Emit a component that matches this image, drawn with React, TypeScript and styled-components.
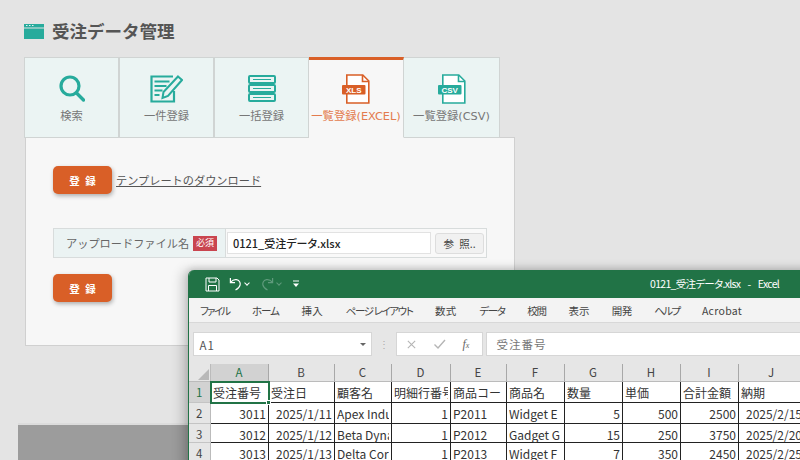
import styled, { createGlobalStyle } from "styled-components";

const GlobalStyle = createGlobalStyle`
	html, body {
		margin: 0;
		padding: 0;
		background: #e4e4e4;
	}
	* {
		box-sizing: border-box;
	}
`;

const JP = `"Noto Sans CJK JP", "Noto Sans", sans-serif`;
const TEAL = "#27ab9c";
const ORANGE = "#d95f27";

type TabKind = "search" | "single" | "bulk" | "xls" | "csv";

const tabs: { kind: TabKind; label: string }[] = [
	{ kind: "search", label: "検索" },
	{ kind: "single", label: "一件登録" },
	{ kind: "bulk", label: "一括登録" },
	{ kind: "xls", label: "一覧登録(EXCEL)" },
	{ kind: "csv", label: "一覧登録(CSV)" },
];

function FileIcon({ color, text }: { color: string; text: string }) {
	return (
		<svg width="28" height="30" viewBox="0 0 28 30">
			<path d="M4.800 1h16l6 6v22h-22z" fill="#fff" stroke={color} strokeWidth="1.600" />
			<path d="M20.500 1v6.500h6.500" fill="none" stroke={color} strokeWidth="1.600" />
			<rect x="0" y="11" width="23.500" height="9.500" rx="1" fill={color} />
			<text x="11.700" y="18.900" textAnchor="middle" fontSize="8" fontWeight="700" fill="#fff" fontFamily="Liberation Sans">
				{text}
			</text>
		</svg>
	);
}

function TabIcon({ kind }: { kind: TabKind }) {
	if (kind === "search") {
		return (
			<svg width="26" height="28" viewBox="0 0 26 28">
				<circle cx="11" cy="11" r="9" fill="none" stroke={TEAL} strokeWidth="3.200" />
				<path d="M17.500 18l7 7" stroke={TEAL} strokeWidth="3.400" strokeLinecap="round" />
			</svg>
		);
	}
	if (kind === "single") {
		return (
			<svg width="33" height="28" viewBox="0 0 33 28">
				<path d="M23 1.500H1.500v25H24V16" fill="none" stroke={TEAL} strokeWidth="2.200" />
				<path d="M4.500 6.500h15M4.500 11h12M4.500 15.500h8M4.500 20h5" stroke={TEAL} strokeWidth="1.800" />
				<path d="M28 1.500l4 3.500L18 21l-5.500 2L13.500 17z" fill="#ebf4f3" stroke={TEAL} strokeWidth="2" />
			</svg>
		);
	}
	if (kind === "bulk") {
		return (
			<svg width="28" height="27" viewBox="0 0 28 27">
				<g fill="none" stroke={TEAL} strokeWidth="2">
					<rect x="1" y="1" width="26" height="7" rx="1" />
					<rect x="1" y="10" width="26" height="7" rx="1" />
					<rect x="1" y="19" width="26" height="7" rx="1" />
				</g>
				<path d="M5 4.500h18M5 13.500h18M5 22.500h18" stroke={TEAL} strokeWidth="1" />
			</svg>
		);
	}
	return <FileIcon color={kind === "xls" ? ORANGE : TEAL} text={kind === "xls" ? "XLS" : "CSV"} />;
}

const ribbonTabs = [
	{ name: "ファイル", tracking: -1.75 },
	{ name: "ホーム", tracking: -1 },
	{ name: "挿入", tracking: 0.4 },
	{ name: "ページ レイアウト", tracking: -1.4 },
	{ name: "数式", tracking: 0.4 },
	{ name: "データ", tracking: -1.3 },
	{ name: "校閲", tracking: -1.1 },
	{ name: "表示", tracking: -0.1 },
	{ name: "開発", tracking: -0.6 },
	{ name: "ヘルプ", tracking: -1.6 },
	{ name: "Acrobat", tracking: 0.3 },
];
const columns = ["A", "B", "C", "D", "E", "F", "G", "H", "I", "J"];
const headerRow = ["受注番号", "受注日", "顧客名", "明細行番号", "商品コード", "商品名", "数量", "単価", "合計金額", "納期"];
const rightColumns = [0, 1, 3, 6, 7, 8, 9];
const dataRows = [
	["3011", "2025/1/11", "Apex Industries", "1", "P2011", "Widget E", "5", "500", "2500", "2025/2/15"],
	["3012", "2025/1/12", "Beta Dynamics", "1", "P2012", "Gadget G", "15", "250", "3750", "2025/2/20"],
	["3013", "2025/1/13", "Delta Corporation", "1", "P2013", "Widget F", "7", "350", "2450", "2025/2/25"],
];

export default function App() {
	return (
		<Page>
			<GlobalStyle />
			<TitleRow>
				<svg width="20" height="15" viewBox="0 0 20 15">
					<rect width="20" height="15" fill={TEAL} />
					<rect y="3.500" width="20" height="1" fill="#e4e4e4" />
					<path d="M2 1.500h1.500M5 1.500h1.500M8 1.500h1.500" stroke="#e4f4f2" strokeWidth="1" />
				</svg>
				<Title>受注データ管理</Title>
			</TitleRow>
			<TabBar>
				{tabs.map((tab) => (
					<Tab key={tab.kind} $active={tab.kind === "xls"}>
						<TabIconBox>
							<TabIcon kind={tab.kind} />
						</TabIconBox>
						<TabLabel>{tab.label}</TabLabel>
					</Tab>
				))}
			</TabBar>
			<Panel>
				<ActionRow>
					<OrangeButton>登 録</OrangeButton>
					<TemplateLink>テンプレートのダウンロード</TemplateLink>
				</ActionRow>
				<UploadRow>
					<UploadLabel>
						アップロードファイル名
						<Required>必須</Required>
					</UploadLabel>
					<UploadField>
						<FileName>0121_受注データ.xlsx</FileName>
						<BrowseButton>参 照..</BrowseButton>
					</UploadField>
				</UploadRow>
				<OrangeButton>登 録</OrangeButton>
			</Panel>
			<GrayBlock />

			<ExcelWindow>
				<TitleBar>
					<svg width="15" height="15" viewBox="0 0 15 15" fill="none" stroke="#fff" strokeWidth="1">
						<path d="M1 1h11l2 2v11H1z" />
						<path d="M4 1v4h7V1M3.500 14V8.500h8V14" />
					</svg>
					<UndoBox>
						<svg width="13" height="14" viewBox="0 0 14 15" fill="none" stroke="#fff" strokeWidth="1.300">
							<path d="M1.500 1v5h5M1.800 5.500C4 3 6 2.500 8 2.800c3 .5 4.500 3 4 5.700-.4 2-2 4-5 5.500" />
						</svg>
						<Caret $dim={false} />
					</UndoBox>
					<UndoBox>
						<svg width="13" height="14" viewBox="0 0 14 15" fill="none" stroke="#5f9a7c" strokeWidth="1.300">
							<path d="M12.500 1v5h-5M12.200 5.500C10 3 8 2.500 6 2.800c-3 .5-4.500 3-4 5.700.4 2 2 4 5 5.500" />
						</svg>
						<Caret $dim />
					</UndoBox>
					<CustomizeIcon>
						<svg width="8" height="8" viewBox="0 0 8 8">
							<path d="M1 1h6" stroke="#fff" strokeWidth="1" />
							<path d="M1 3.500h6L4 7z" fill="#fff" />
						</svg>
					</CustomizeIcon>
					<WindowTitle>0121_受注データ.xlsx&nbsp; - &nbsp;Excel</WindowTitle>
				</TitleBar>
				<RibbonTabs>
					{ribbonTabs.map((tab) => (
						<RibbonTab key={tab.name} $tracking={tab.tracking}>
							{tab.name}
						</RibbonTab>
					))}
				</RibbonTabs>
				<FormulaBar>
					<NameBox>
						A1
						<NameCaret />
					</NameBox>
					<Dots>⋮</Dots>
					<FxBox>
						<svg width="11" height="11" viewBox="0 0 12 12" fill="none" stroke="#b5b5b5" strokeWidth="1.200">
							<path d="M2 2l8 8M10 2l-8 8" />
						</svg>
						<svg width="13" height="12" viewBox="0 0 13 12" fill="none" stroke="#b5b5b5" strokeWidth="1.400">
							<path d="M1.500 6.500L5 10l7-8" />
						</svg>
						<FxLabel>
							f<small>x</small>
						</FxLabel>
					</FxBox>
					<FormulaInput>受注番号</FormulaInput>
				</FormulaBar>
				<Sheet>
					<Corner />
					{columns.map((col, i) => (
						<ColHead key={col} $active={i === 0}>
							{col}
						</ColHead>
					))}
					<RowHead $active>1</RowHead>
					{headerRow.map((text, i) => (
						<Cell key={text} $selected={i === 0}>
							<CellText>{text}</CellText>
							{i === 0 && <FillHandle />}
						</Cell>
					))}
					{dataRows.map((row, r) => (
						<SheetRow key={row[0]} row={row} index={r + 2} />
					))}
				</Sheet>
			</ExcelWindow>
		</Page>
	);
}

function SheetRow({ row, index }: { row: string[]; index: number }) {
	return (
		<>
			<RowHead $active={false}>{index}</RowHead>
			{row.map((text, i) => (
				<Cell key={`${text}_${i}`} $right={rightColumns.includes(i)}>
					<CellText>{text}</CellText>
				</Cell>
			))}
		</>
	);
}

const Page = styled.div`
	position: relative;
	width: 800px;
	height: 460px;
	overflow: hidden;
	background: #e4e4e4;
	font-family: ${JP};
	padding-top: 23px;
`;

const TitleRow = styled.div`
	display: flex;
	align-items: center;
	gap: 8px;
	height: 16px;
	margin-left: 24px;
`;

const Title = styled.h1`
	margin: 0;
	font-size: 17.5px;
	font-weight: 700;
	line-height: 16px;
	color: #555;
`;

const TabBar = styled.div`
	display: flex;
	margin: 18px 0 0 24px;
	width: 476px;
	height: 81px;
	position: relative;
	z-index: 1;
`;

const Tab = styled.div<{ $active: boolean }>`
	width: 95px;
	flex: none;
	display: flex;
	flex-direction: column;
	align-items: center;
	background: ${({ $active }) => ($active ? "#f7f7f7" : "#ebf4f3")};
	border: 1px solid #d0d4d3;
	border-left-width: ${({ $active }) => ($active ? "0" : "1px")};
	border-top: ${({ $active }) => ($active ? `3px solid ${ORANGE}` : "1px solid #d0d4d3")};
	border-bottom: ${({ $active }) => ($active ? "1px solid #f7f7f7" : "1px solid #d0d4d3")};
	color: ${({ $active }) => ($active ? "#e37b4e" : "#777")};
	padding-top: ${({ $active }) => ($active ? "13px" : "15px")};
	&:last-child {
		width: 96px;
		border-left-width: 0;
	}
`;

const TabIconBox = styled.div`
	height: 31px;
	display: flex;
	align-items: center;
	justify-content: center;
`;

const TabLabel = styled.div`
	margin-top: 4.5px;
	font-family: "DejaVu Sans", ${JP};
	font-size: 11.3px;
	line-height: 16px;
	white-space: nowrap;
`;

const Panel = styled.div`
	margin: -1px 0 0 25px;
	width: 490px;
	height: 209px;
	background: #f7f7f7;
	border: 1px solid #d0d0d0;
	padding: 28px 0 0 27px;
`;

const ActionRow = styled.div`
	display: flex;
	align-items: center;
	gap: 4px;
	margin-bottom: 34px;
`;

const OrangeButton = styled.button`
	display: block;
	width: 59px;
	height: 28px;
	padding: 0;
	border: 0;
	border-radius: 5px;
	background: ${ORANGE};
	color: #fff;
	font-family: ${JP};
	font-size: 10.5px;
	font-weight: 700;
	word-spacing: 3px;
	box-shadow: 1px 2px 4px rgba(0, 0, 0, 0.3);
`;

const TemplateLink = styled.a`
	font-size: 11.2px;
	color: #555;
	text-decoration: underline;
	white-space: nowrap;
`;

const UploadRow = styled.div`
	display: flex;
	width: 434px;
	height: 30px;
	margin-bottom: 16px;
	border: 1px solid #d8dcdc;
`;

const UploadLabel = styled.div`
	display: flex;
	align-items: center;
	width: 172px;
	padding-left: 12px;
	background: #ebf3f3;
	border-right: 1px solid #d8dcdc;
	font-size: 11.2px;
	color: #666;
	white-space: nowrap;
`;

const Required = styled.span`
	margin-left: 4px;
	width: 24px;
	height: 15px;
	background: #c9454f;
	color: #fff;
	font-size: 9px;
	line-height: 14px;
	text-align: center;
`;

const UploadField = styled.div`
	flex: 1;
	display: flex;
	align-items: center;
	gap: 4px;
	padding: 0 1px;
	background: #f9f9f9;
`;

const FileName = styled.div`
	width: 204px;
	height: 22px;
	padding-left: 5px;
	background: #fff;
	border: 1px solid #e2e2e2;
	font-size: 11px;
	font-feature-settings: "palt";
	line-height: 20px;
	font-weight: 500;
	color: #222;
`;

const BrowseButton = styled.button`
	width: 49px;
	height: 21px;
	padding: 0;
	border: 1px solid #ddd;
	border-radius: 3px;
	background: #f1f1f1;
	color: #444;
	font-family: ${JP};
	font-size: 10.5px;
	word-spacing: 3px;
`;

const GrayBlock = styled.div`
	margin: 77px 0 0 18px;
	height: 40px;
	background: #9c9c9c;
	border-top: 2px solid #dcdcdc;
`;

const ExcelWindow = styled.div`
	position: absolute;
	left: 188px;
	top: 270px;
	width: 640px;
	height: 200px;
	overflow: hidden;
	border-radius: 6px 0 0 0;
	border-left: 1.5px solid #217346;
	background: #e6e6e6;
	font-family: ${JP};
	box-shadow: -6px 0 12px rgba(0, 0, 0, 0.18), 0 -2px 6px rgba(0, 0, 0, 0.12);
	z-index: 2;
`;

const TitleBar = styled.div`
	position: relative;
	display: flex;
	align-items: center;
	height: 28px;
	padding-left: 16px;
	background: #217346;
	color: #fff;
`;

const UndoBox = styled.div`
	display: flex;
	align-items: center;
	gap: 3px;
	width: 29px;
	margin-left: 3px;
	&:first-of-type {
		margin-left: 9px;
	}
`;

const Caret = styled.span<{ $dim: boolean }>`
	width: 4px;
	height: 4px;
	margin-top: -2px;
	border-right: 1px solid ${({ $dim }) => ($dim ? "#5f9a7c" : "#fff")};
	border-bottom: 1px solid ${({ $dim }) => ($dim ? "#5f9a7c" : "#fff")};
	transform: rotate(45deg);
`;

const CustomizeIcon = styled.div`
	display: flex;
	margin-left: 2px;
`;

const WindowTitle = styled.div`
	position: absolute;
	left: 461px;
	top: 0;
	font-size: 10.5px;
	font-feature-settings: "palt";
	letter-spacing: -0.7px;
	word-spacing: 2px;
	line-height: 27px;
	white-space: nowrap;
`;

const RibbonTabs = styled.div`
	display: flex;
	align-items: center;
	gap: 22.5px;
	height: 25px;
	padding-left: 11px;
	background: #f3f3f3;
	border-bottom: 1px solid #d8d8d8;
	box-shadow: 0 1px 3px rgba(0, 0, 0, 0.1);
`;

const RibbonTab = styled.div<{ $tracking: number }>`
	font-size: 10.5px;
	font-feature-settings: "palt";
	letter-spacing: ${({ $tracking }) => $tracking}px;
	color: #444;
	white-space: nowrap;
`;

const FormulaBar = styled.div`
	display: flex;
	align-items: flex-start;
	height: 41px;
	padding: 9px 0 0 3.5px;
	background: #e6e6e6;
`;

const NameBox = styled.div`
	position: relative;
	width: 179px;
	height: 24px;
	padding-left: 6px;
	background: #fff;
	border: 1px solid #d6d6d6;
	font-size: 11.5px;
	line-height: 24px;
	letter-spacing: 1px;
	color: #555;
`;

const NameCaret = styled.span`
	position: absolute;
	right: 5px;
	top: 10px;
	border: 3px solid transparent;
	border-top: 3px solid #666;
`;

const Dots = styled.div`
	width: 24px;
	font-size: 10px;
	line-height: 24px;
	text-align: center;
	color: #aaa;
`;

const FxBox = styled.div`
	display: flex;
	align-items: center;
	gap: 16px;
	width: 87px;
	height: 24px;
	padding-left: 9px;
	background: #fff;
	border: 1px solid #d6d6d6;
`;

const FxLabel = styled.span`
	margin-left: 1px;
	font-family: "Liberation Serif", serif;
	font-style: italic;
	font-size: 12px;
	color: #666;
	small {
		font-size: 8px;
	}
`;

const FormulaInput = styled.div`
	flex: 1;
	height: 24px;
	margin-left: 3px;
	padding-left: 10px;
	background: #fff;
	border: 1px solid #d6d6d6;
	font-size: 11.5px;
	line-height: 22px;
	letter-spacing: 1px;
	color: #777;
`;

const Sheet = styled.div`
	display: grid;
	grid-template-columns: 21.5px 58px 66px 57px 59px 56px 58px 58px 58px 58px 66px;
	grid-template-rows: 18px 21px 21px 19px 21px;
	background: #fff;
	font-size: 12px;
	color: #333;
`;

const Corner = styled.div`
	position: relative;
	background: #e6e6e6;
	border-right: 1px solid #bbb;
	border-bottom: 1px solid #bbb;
	&::after {
		content: "";
		position: absolute;
		right: 1px;
		bottom: 1px;
		border-style: solid;
		border-width: 0 0 11px 11px;
		border-color: transparent transparent #b8b8b8 transparent;
	}
`;

const ColHead = styled.div<{ $active: boolean }>`
	background: ${({ $active }) => ($active ? "#d2d2d2" : "#e6e6e6")};
	color: ${({ $active }) => ($active ? "#217346" : "#444")};
	border-right: 1px solid #a8a8a8;
	border-bottom: 1px solid #bbb;
	font-size: 11.5px;
	line-height: 17px;
	text-align: center;
`;

const RowHead = styled.div<{ $active: boolean }>`
	background: ${({ $active }) => ($active ? "#d2d2d2" : "#e6e6e6")};
	color: ${({ $active }) => ($active ? "#217346" : "#444")};
	border-right: 1px solid #bbb;
	border-bottom: 1px solid #c4c4c4;
	font-size: 11.5px;
	line-height: 20px;
	text-align: center;
`;

const Cell = styled.div<{ $right?: boolean; $selected?: boolean }>`
	position: relative;
	min-width: 0;
	padding: 0 1.5px 0 2.5px;
	white-space: nowrap;
	line-height: 21px;
	text-align: ${({ $right }) => ($right ? "right" : "left")};
	border-right: 1px solid #222;
	border-bottom: 1px solid #222;
	background: #fff;
	${({ $selected }) => $selected && "outline: 2px solid #217346; outline-offset: -1px; z-index: 1;"}
`;

const CellText = styled.span`
	display: block;
	overflow: hidden;
`;

const FillHandle = styled.span`
	position: absolute;
	right: -3px;
	bottom: -3px;
	width: 5px;
	height: 5px;
	background: #217346;
	border: 1px solid #fff;
`;
